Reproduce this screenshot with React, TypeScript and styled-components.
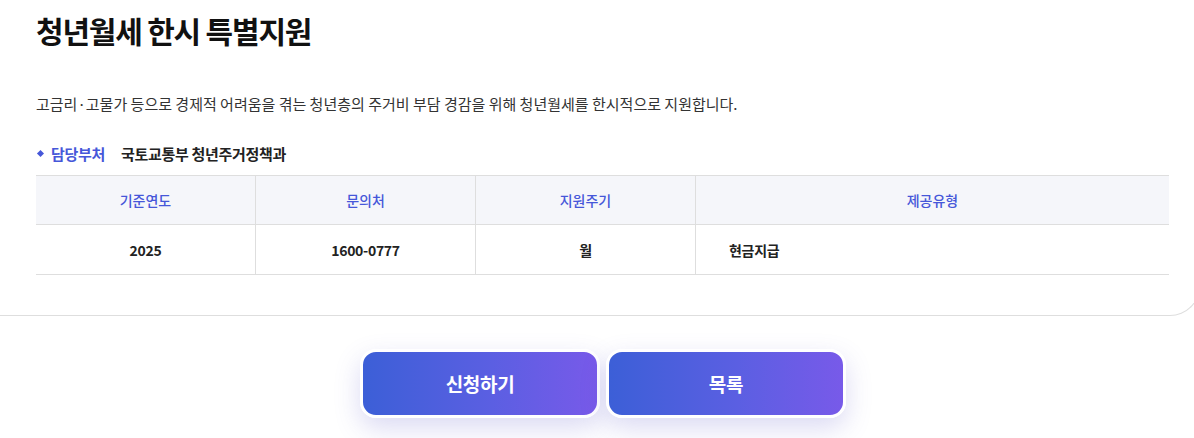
import React from "react";
import styled, { createGlobalStyle } from "styled-components";

const GlobalStyle = createGlobalStyle`
  html, body {
    margin: 0;
    padding: 0;
    background: #ffffff;
    overflow-x: hidden;
  }
  body {
    font-family: "Noto Sans CJK KR", "Noto Sans", sans-serif;
    color: #222;
  }
  * { box-sizing: border-box; }
`;

const Page = styled.div`
  width: 1200px;
  display: flex;
  flex-direction: column;
`;

const Card = styled.section`
  display: flex;
  flex-direction: column;
  padding: 10px 30px 40px 36px;
  border-bottom: 1px solid #dedede;
  border-right: 1px solid #dedede;
  border-bottom-right-radius: 30px;
`;

const Title = styled.h1`
  margin: 0;
  font-size: 30px;
  line-height: 40px;
  font-weight: 700;
  color: #111;
  letter-spacing: -1.2px;
`;

const Desc = styled.p`
  margin: 43px 0 0;
  font-size: 15px;
  line-height: 22px;
  color: #333;
  letter-spacing: 0;
`;

const DeptRow = styled.div`
  margin-top: 27px;
  display: flex;
  align-items: center;
  height: 22px;
  font-size: 15px;
  letter-spacing: -0.3px;
`;

const DeptLabel = styled.span`
  display: flex;
  align-items: center;
  gap: 8px;
  color: #4657d9;
  font-weight: 700;
  width: 85px;
  padding-left: 2px;
`;

const Diamond = styled.i`
  display: block;
  width: 5px;
  height: 5px;
  background: #4657d9;
  transform: rotate(45deg);
`;

const DeptValue = styled.span`
  font-weight: 700;
  color: #222;
`;

const Table = styled.div`
  margin-top: 11px;
  display: grid;
  grid-template-columns: 220px 220px 220px 1fr;
  border-top: 1px solid #dedede;
`;

const HeadCell = styled.div<{ $last?: boolean }>`
  height: 49px;
  display: flex;
  align-items: center;
  justify-content: center;
  background: #f5f6fa;
  color: #4657d9;
  font-size: 14px;
  font-weight: 500;
  border-bottom: 1px solid #dedede;
  border-right: ${(p) => (p.$last ? "none" : "1px solid #dedede")};
`;

const BodyCell = styled.div<{ $last?: boolean; $left?: boolean }>`
  height: 50px;
  display: flex;
  align-items: center;
  justify-content: ${(p) => (p.$left ? "flex-start" : "center")};
  padding-left: ${(p) => (p.$left ? "33px" : "0")};
  color: #222;
  font-size: 14px;
  font-weight: 700;
  letter-spacing: -0.3px;
  border-bottom: 1px solid #dedede;
  border-right: ${(p) => (p.$last ? "none" : "1px solid #dedede")};
`;

const Buttons = styled.div`
  margin-top: 33px;
  display: flex;
  justify-content: center;
  gap: 6px;
  padding: 0 0 30px 6px;
`;

const ActionButton = styled.button`
  width: 240px;
  height: 69px;
  border: 3px solid #ffffff;
  border-radius: 16px;
  background: linear-gradient(90deg, #3c5fd7 0%, #5b5fe2 55%, #785ae9 100%);
  color: #ffffff;
  font-family: "Noto Sans CJK KR", "Noto Sans", sans-serif;
  font-size: 19px;
  font-weight: 700;
  letter-spacing: -0.3px;
  box-shadow: 0 10px 26px rgba(92, 86, 200, 0.22);
  cursor: pointer;
`;

const heads = ["기준연도", "문의처", "지원주기", "제공유형"];
const values = ["2025", "1600-0777", "월", "현금지급"];

export default function App() {
  return (
    <Page>
      <GlobalStyle />
      <Card>
        <Title>청년월세 한시 특별지원</Title>
        <Desc>
          고금리·고물가 등으로 경제적 어려움을 겪는 청년층의 주거비 부담 경감을 위해 청년월세를 한시적으로 지원합니다.
        </Desc>
        <DeptRow>
          <DeptLabel>
            <Diamond />
            담당부처
          </DeptLabel>
          <DeptValue>국토교통부 청년주거정책과</DeptValue>
        </DeptRow>
        <Table>
          {heads.map((h, i) => (
            <HeadCell key={h} $last={i === heads.length - 1}>
              {h}
            </HeadCell>
          ))}
          {values.map((v, i) => (
            <BodyCell key={v} $last={i === values.length - 1} $left={i === values.length - 1}>
              {v}
            </BodyCell>
          ))}
        </Table>
      </Card>
      <Buttons>
        <ActionButton>신청하기</ActionButton>
        <ActionButton>목록</ActionButton>
      </Buttons>
    </Page>
  );
}
